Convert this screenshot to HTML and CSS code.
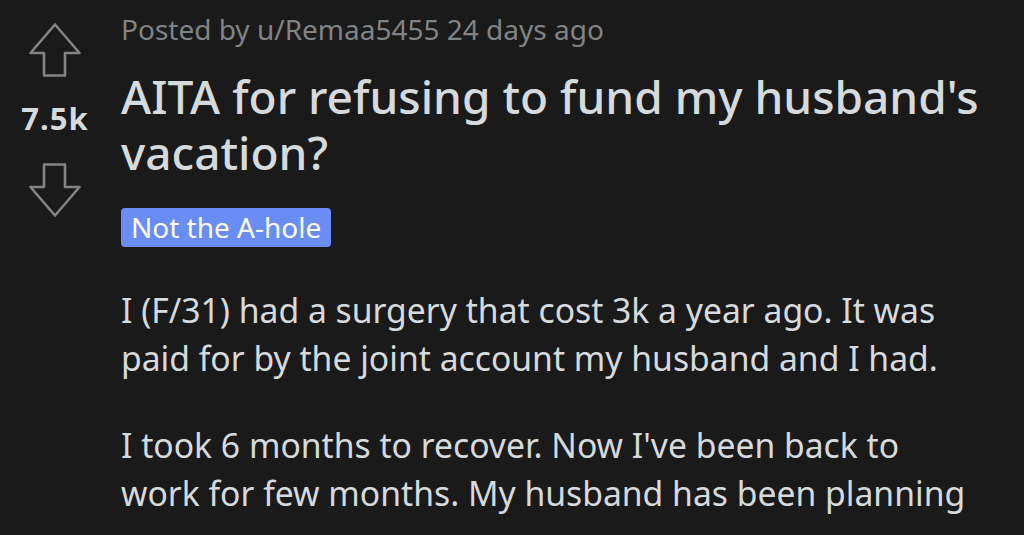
FILE: index.html
```html
<!DOCTYPE html>
<html lang="en">
<head>
<meta charset="utf-8">
<title>AITA post</title>
<link rel="stylesheet" href="styles.css">
</head>
<body>
<div class="post">
  <div class="votes">
    <svg class="arrow" width="52" height="54" viewBox="0 0 52 54" aria-hidden="true">
      <path d="M26 1.5 L50.5 30 L36 30 L36 52.5 L15 52.5 L15 30 L1.5 30 Z" fill="none" stroke="#818384" stroke-width="2.6" stroke-linejoin="round"/>
    </svg>
    <div class="score">7.5k</div>
    <svg class="arrow down" width="52" height="54" viewBox="0 0 52 54" aria-hidden="true">
      <path d="M26 52.5 L50.5 24 L36 24 L36 1.5 L15 1.5 L15 24 L1.5 24 Z" fill="none" stroke="#818384" stroke-width="2.6" stroke-linejoin="round"/>
    </svg>
  </div>
  <div class="content">
    <div class="meta">Posted by u/Remaa5455 24 days ago</div>
    <h1 class="title">AITA for refusing to fund my husband's vacation?</h1>
    <span class="flair">Not the A-hole</span>
    <div class="body">
      <p>I (F/31) had a surgery that cost 3k a year ago. It was paid for by the joint account my husband and I had.</p>
      <p>I took 6 months to recover. Now I've been back to work for few months. My husband has been planning</p>
    </div>
  </div>
</div>
</body>
</html>
```
FILE: styles.css
```css
html, body {
  margin: 0;
  padding: 0;
  background: #1a1a1b;
  height: 100%;
  overflow: hidden;
}
body {
  font-family: "Noto Sans", "DejaVu Sans", sans-serif;
  color: #d7dadc;
}
.post {
  display: flex;
  gap: 11px;
}
.votes {
  width: 110px;
  flex: none;
  display: flex;
  flex-direction: column;
  align-items: center;
  padding-top: 23px;
}
.arrow {
  display: block;
}
.score {
  margin-top: 26px;
  margin-bottom: 30px;
  font-size: 31px;
  line-height: 30px;
  font-weight: 700;
  letter-spacing: 1px;
  color: #d7dadc;
}
.content {
  flex: 1;
  min-width: 0;
  padding-top: 13px;
  padding-right: 40px;
}
.meta {
  font-size: 28px;
  line-height: 32px;
  color: #818384;
}
.title {
  margin: 23px 0 0;
  font-size: 46px;
  line-height: 56px;
  font-weight: 500;
  color: #d7dadc;
}
.flair {
  display: inline-block;
  margin-top: 28px;
  height: 39px;
  padding: 0 10px;
  font-size: 28px;
  line-height: 39px;
  color: #ffffff;
  background: #6a8cf7;
  border-radius: 4px;
}
.body {
  margin-top: 39px;
}
.body p {
  margin: 0 0 39px;
  font-size: 33.7px;
  line-height: 48px;
  color: #d7dadc;
}
```
